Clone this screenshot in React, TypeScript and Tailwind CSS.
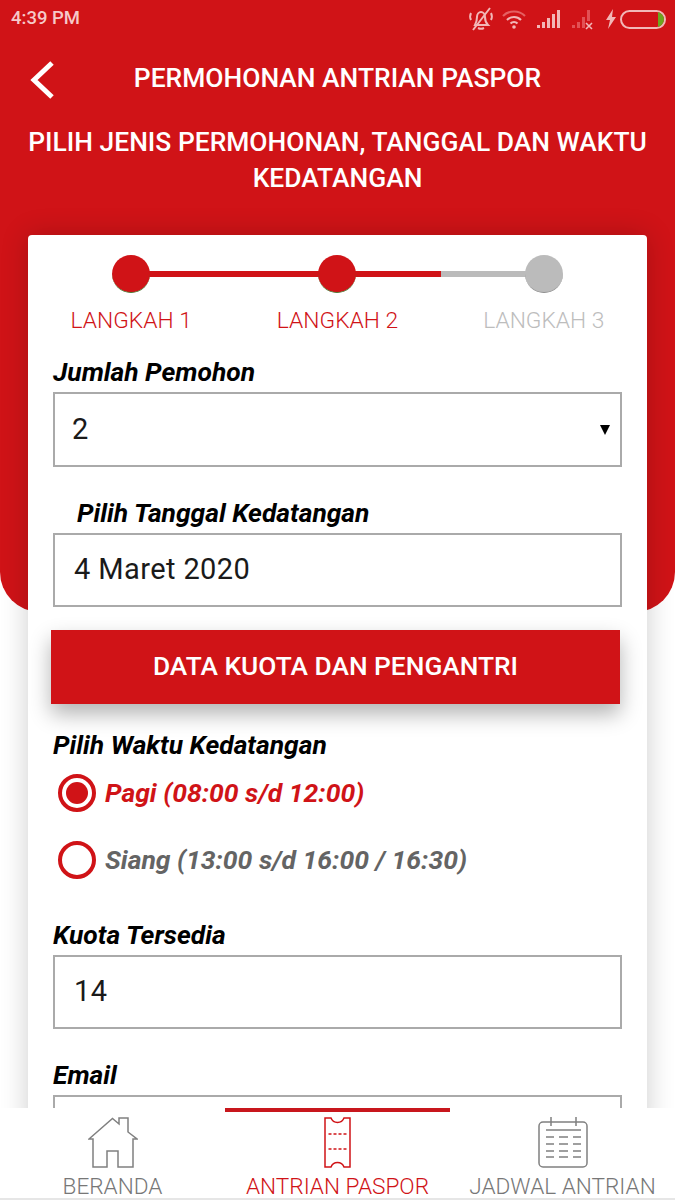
import { ReactNode } from 'react';

const FieldLabel = ({ children, className = '' }: { children: ReactNode; className?: string }) => (
  <div className={`text-[26.4px] leading-[30px] font-bold italic text-black ${className}`}>{children}</div>
);

const Field = ({ value, className = '' }: { value: string; className?: string }) => (
  <div className={`h-[74px] shrink-0 border-2 border-[#aaaaaa] flex items-center pl-[19px] text-[29px] text-[#1a1a1a] tracking-[0.4px] ${className}`}>
    {value}
  </div>
);

const StatusIcons = () => (
  <div className="flex items-center gap-[6px] opacity-90">
    {/* muted bell */}
    <svg width="26" height="26" viewBox="0 0 26 26" fill="none" stroke="#f6c9c9" strokeWidth="2">
      <path d="M7 19c1-2 2-4 2-8 0-3 2-5 4-5s4 2 4 5c0 4 1 6 3 8z" />
      <path d="M10 22c2 1 4 1 6 0" />
      <path d="M3 7c-1 2-1 5 0 7M23 7c1 2 1 5 0 7M22 2 5 24" />
    </svg>
    {/* wifi */}
    <svg width="26" height="22" viewBox="0 0 26 22" fill="none" strokeWidth="2.2" className="ml-[1px]">
      <path d="M2 8c6-6 16-6 22 0" stroke="#e8696b" />
      <path d="M6 12c4-4 10-4 14 0M9.5 15.5c2-2 5-2 7 0" stroke="#f6c9c9" />
      <circle cx="13" cy="19" r="1.8" fill="#f6c9c9" />
    </svg>
    <svg width="26" height="20" viewBox="0 0 26 20" fill="#f6c9c9" className="ml-[3px]">
      <rect x="1" y="16" width="3" height="3" />
      <rect x="6" y="13" width="3" height="6" />
      <rect x="11" y="9" width="3" height="10" />
      <rect x="16" y="5" width="3" height="14" />
      <rect x="21" y="1" width="3" height="18" />
    </svg>
    <svg width="26" height="22" viewBox="0 0 26 22" className="ml-[3px]">
      <g fill="#e4585b">
        <rect x="1" y="17" width="3" height="3" />
        <rect x="6" y="14" width="3" height="6" />
        <rect x="11" y="9" width="3" height="11" />
        <rect x="16" y="2" width="3" height="11" />
      </g>
      <path d="M15 15l6 6M21 15l-6 6" stroke="#f6c9c9" strokeWidth="1.6" />
    </svg>
    <svg width="12" height="22" viewBox="0 0 12 22" fill="#f6c9c9" className="ml-[2px]">
      <path d="M8 1 1 12h4l-2 9 8-12H7z" />
    </svg>
    <div className="w-[46px] h-[19px] -ml-[3px] rounded-full border-2 border-[#f6c9c9] flex justify-end overflow-hidden">
      <div className="w-[6px] h-full bg-[#62b51f]" />
    </div>
  </div>
);

const StepDot = ({ label, active }: { label: string; active: boolean }) => (
  <div className="flex flex-col items-center">
    <div
      className={`relative z-10 w-[38px] h-[38px] rounded-full border-b ${
        active ? 'bg-[#d01317] border-[#4d7a35]' : 'bg-[#bbbbbb] border-[#8f8f8f]'
      }`}
    />
    <div className={`mt-[15px] text-[22.8px] leading-[26px] font-light ${active ? 'text-[#d01317]' : 'text-[#bdbdbd]'}`}>
      {label}
    </div>
  </div>
);

const Radio = ({ label, checked }: { label: string; checked: boolean }) => (
  <div className="h-[38px] flex items-center pl-[5px]">
    <div className="w-[38px] h-[38px] rounded-full border-[4px] border-[#d01317] flex items-center justify-center shrink-0">
      {checked && <div className="w-[22px] h-[22px] rounded-full bg-[#d01317]" />}
    </div>
    <span className={`ml-[9px] text-[26.5px] font-bold italic ${checked ? 'text-[#d01317]' : 'text-[#646464]'}`}>{label}</span>
  </div>
);

const NavItem = ({ icon, label, active }: { icon: ReactNode; label: string; active?: boolean }) => (
  <div className="flex flex-col items-center w-[225px]">
    <div className={`w-full h-[4px] shrink-0 ${active ? 'bg-[#c8171d]' : ''}`} />
    <div className="h-[52px] shrink-0 mt-[4px] flex items-center">{icon}</div>
    <div className={`mt-[5px] shrink-0 text-[22.6px] leading-[28px] font-light whitespace-nowrap ${active ? 'text-[#d01317]' : 'text-[#777777]'}`}>
      {label}
    </div>
  </div>
);

const App = () => {
  return (
    <div className="relative w-[675px] h-[1200px] overflow-hidden bg-white flex flex-col font-['Roboto',sans-serif]">
      {/* red backdrop */}
      <div className="absolute top-0 left-0 w-full h-[612px] bg-[#d01317] rounded-b-[40px]" />

      <div className="relative flex-1 min-h-0 overflow-hidden">
        <div className="h-[38px] flex items-center justify-between pl-[11px] pr-[9px]">
          <span className="text-[18.5px] font-medium text-[#f6c9c9]">4:39 PM</span>
          <StatusIcons />
        </div>

        <div className="relative h-[80px] mt-[1px] flex items-center justify-center">
          <svg className="absolute left-[28px] top-[22px]" width="28" height="38" viewBox="0 0 28 38" fill="none" stroke="#fff" strokeWidth="5">
            <path d="M24 2 6 19l18 17" />
          </svg>
          <h1 className="text-[26.4px] font-medium text-white">PERMOHONAN ANTRIAN PASPOR</h1>
        </div>

        <h2 className="mt-[5px] text-center text-white text-[26.4px] leading-[36px] font-medium px-[20px]">
          PILIH JENIS PERMOHONAN, TANGGAL DAN WAKTU KEDATANGAN
        </h2>

        <div className="mx-[28px] mt-[39px] h-[900px] bg-white rounded-[4px] shadow-[0_0_28px_rgba(0,0,0,0.2)]">
          {/* steps */}
          <div className="relative pt-[20px] grid grid-cols-3">
            <div className="absolute top-[36px] left-[103px] w-[310px] h-[6px] bg-[#d01317]" />
            <div className="absolute top-[36px] left-[413px] w-[100px] h-[6px] bg-[#bbbbbb]" />
            <StepDot label="LANGKAH 1" active />
            <StepDot label="LANGKAH 2" active />
            <StepDot label="LANGKAH 3" active={false} />
          </div>

          <div className="pl-[25px] pr-[25px] flex flex-col">
            <FieldLabel className="mt-[23px] mb-[5px]">Jumlah Pemohon</FieldLabel>
            <div className="h-[75px] border-2 border-[#aaaaaa] flex items-center justify-between pl-[17px] pr-[10px] text-[29px] text-[#1a1a1a]">
              <span>2</span>
              <span className="w-0 h-0 border-x-[5.5px] border-x-transparent border-t-[10px] border-t-black" />
            </div>

            <FieldLabel className="mt-[31px] mb-[5px] pl-[24px]">Pilih Tanggal Kedatangan</FieldLabel>
            <Field value="4 Maret 2020" />

            <div className="-ml-[2px] mr-[2px] mt-[23px] h-[74px] bg-[#d01317] flex items-center justify-center text-white text-[26.3px] font-medium shadow-[0_10px_20px_rgba(0,0,0,0.3)]">
              DATA KUOTA DAN PENGANTRI
            </div>

            <FieldLabel className="mt-[26px]">Pilih Waktu Kedatangan</FieldLabel>
            <div className="mt-[14px] flex flex-col gap-[29px]">
              <Radio label="Pagi (08:00 s/d 12:00)" checked />
              <Radio label="Siang (13:00 s/d 16:00 / 16:30)" checked={false} />
            </div>

            <FieldLabel className="mt-[41px] mb-[5px]">Kuota Tersedia</FieldLabel>
            <Field value="14" />

            <FieldLabel className="mt-[31px] mb-[5px]">Email</FieldLabel>
            <Field value="" />
          </div>
        </div>
      </div>

      {/* bottom nav */}
      <div className="relative h-[92px] shrink-0 bg-white flex border-b-2 border-[#e6e6e6]">
        <NavItem
          label="BERANDA"
          icon={
            <svg width="50" height="51" viewBox="0 0 50 51" fill="none" stroke="#808080" strokeWidth="1.5">
              <path d="M1 22 24.5 1.5 31 7V1h9v14l9 7h-4v28H30V34H19v16H5V22z" />
            </svg>
          }
        />
        <NavItem
          active
          label="ANTRIAN PASPOR"
          icon={
            <svg width="27" height="51" viewBox="0 0 27 51" fill="none" stroke="#d01317" strokeWidth="1.5">
              <path d="M1 1h6a7 7 0 0 0 13 0h6v49h-6a7 7 0 0 0-13 0H1z" />
              <path d="M4.5 17h18M4.5 32h18" strokeDasharray="3 2" />
            </svg>
          }
        />
        <NavItem
          label="JADWAL ANTRIAN"
          icon={
            <svg width="50" height="51" viewBox="0 0 50 51" fill="none" stroke="#808080" strokeWidth="1.5">
              <rect x="1" y="5" width="48" height="45" rx="4" />
              <path d="M13 0v9M38 0v9M8 13h35" />
              <path d="M8 20h8M21 20h9M35 20h8M8 27h8M21 27h9M35 27h8M8 34h8M21 34h9M35 34h8M8 40h8M21 40h9M35 40h8" />
            </svg>
          }
        />
      </div>
    </div>
  );
};

export default App;
